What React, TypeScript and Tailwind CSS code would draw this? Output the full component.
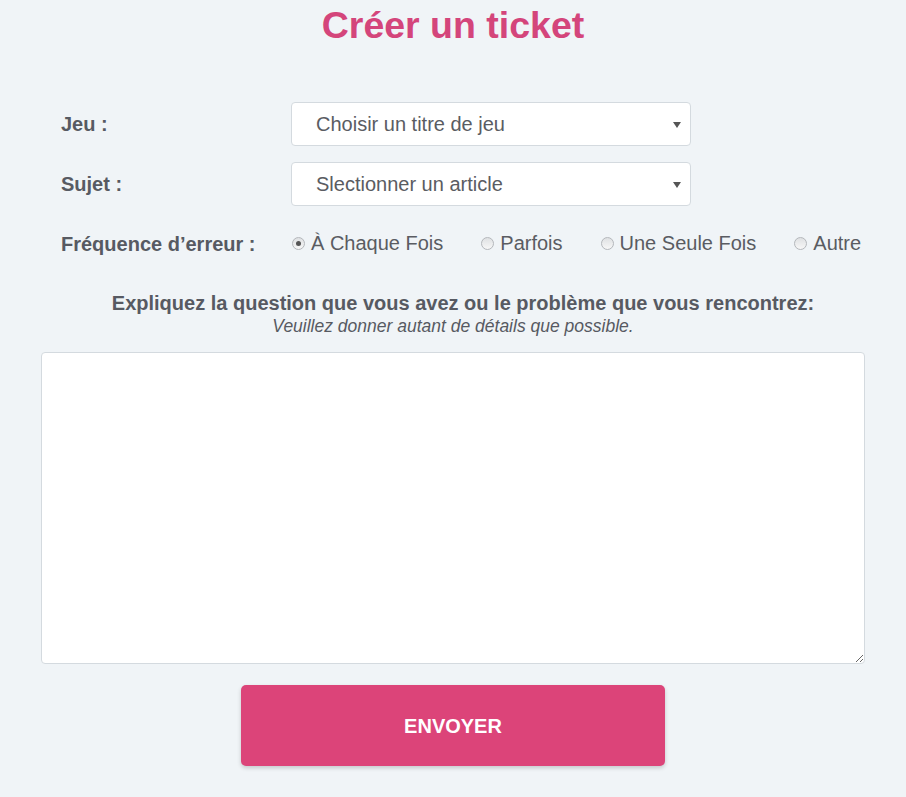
import React from "react";

const options = ["À Chaque Fois", "Parfois", "Une Seule Fois", "Autre"];

const Radio = ({ checked }: { checked?: boolean }) => (
	<span className="flex h-[13px] w-[13px] items-center justify-center rounded-full border border-[#b4b7bb] bg-gradient-to-b from-[#dfe1e3] to-[#f7f7f7]">
		{checked && <span className="h-[5px] w-[5px] rounded-full bg-[#555]" />}
	</span>
);

const SelectBox = ({ placeholder }: { placeholder: string }) => (
	<div className="flex h-[44px] w-[400px] items-center justify-between rounded-[4px] border border-[#d4dadf] bg-white pl-[24px] pr-[9px] text-[20px] text-[#5a5c62]">
		<span>{placeholder}</span>
		<svg width="8" height="6" viewBox="0 0 8 6" className="mt-[1px]">
			<path d="M0 0 L8 0 L4 6 Z" fill="#555" />
		</svg>
	</div>
);

const Row = ({ label, children }: { label: string; children: React.ReactNode }) => (
	<div className="flex h-[44px] items-center pl-[20px]">
		<div className="w-[230px] text-[20px] font-bold text-[#575a62]">{label}</div>
		{children}
	</div>
);

const App = () => {
	return (
		<div
			className="min-h-[797px] bg-[#f0f4f7] px-[41px] text-[#575a62]"
			style={{ fontFamily: '"Liberation Sans", Arial, sans-serif' }}
		>
			<h1 className="pt-[3px] text-center text-[37.5px] font-bold leading-[44px] text-[#d4457b]">
				Créer un ticket
			</h1>

			<div className="mt-[55px] flex flex-col gap-[16px]">
				<Row label="Jeu :">
					<SelectBox placeholder="Choisir un titre de jeu" />
				</Row>
				<Row label="Sujet :">
					<SelectBox placeholder="Slectionner un article" />
				</Row>
				<Row label="Fréquence d’erreur :">
					<div className="ml-[1px] -mt-[2px] flex items-center gap-[38px] text-[20px] text-[#5a5c62]">
						{options.map((option, index) => (
							<label key={index} className="flex items-center gap-[6px]">
								<Radio checked={index === 0} />
								<span>{option}</span>
							</label>
						))}
					</div>
				</Row>
			</div>

			<p className="mt-[26px] pl-[20px] text-center text-[20px] font-bold leading-[23px]">
				Expliquez la question que vous avez ou le problème que vous rencontrez:
			</p>
			<p className="text-center text-[17.5px] italic leading-[22px]">
				Veuillez donner autant de détails que possible.
			</p>

			<textarea className="mt-[15px] block h-[312px] w-full rounded-[4px] border border-[#d4dadf] bg-white p-3 outline-none" />

			<div className="mt-[21px] flex justify-center">
				<button className="h-[81px] w-[424px] rounded-[5px] bg-[#dc4479] text-[20px] font-bold text-white shadow-[0_2px_4px_rgba(0,0,0,0.18)]">
					ENVOYER
				</button>
			</div>
		</div>
	);
};

export default App;
